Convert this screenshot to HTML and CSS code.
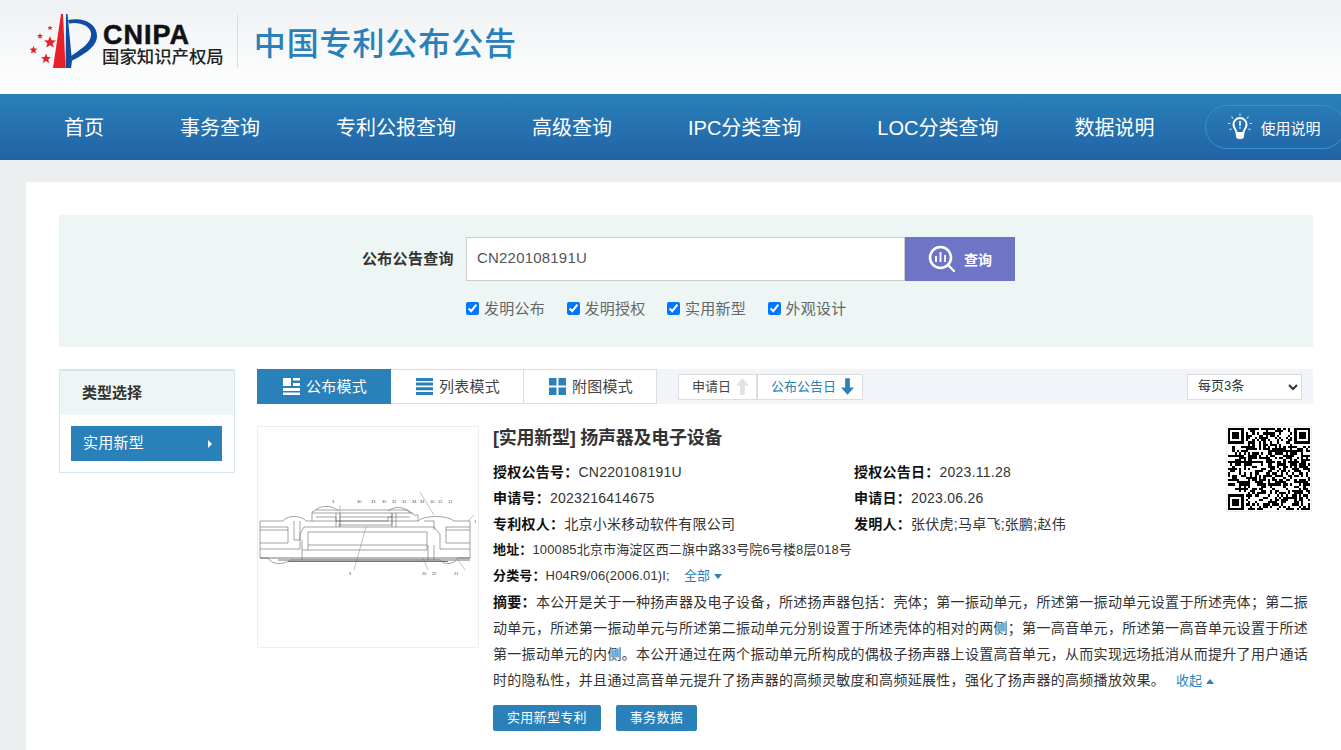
FILE: index.html
```html
<!DOCTYPE html>
<html lang="zh-CN">
<head>
    <meta charset="UTF-8">
    <title>中国专利公布公告</title>
    <link rel="stylesheet" href="styles.css">
</head>
<body>
    <header class="header">
        <div class="logo">
            <svg class="logo-mark" viewBox="28 12 72 58" width="72" height="58">
                <g fill="#e8202a">
                    <polygon points="50,36 51.6,40.2 56,40.4 52.6,43.2 53.8,47.6 50,45.2 46.2,47.6 47.4,43.2 44,40.4 48.4,40.2"/>
                    <polygon points="40,33 40.8,35 43,35.2 41.3,36.6 41.9,38.8 40,37.6 38.1,38.8 38.7,36.6 37,35.2 39.2,35"/>
                    <polygon points="50,25.5 50.7,27 52.5,27.2 51.2,28.3 51.6,30 50,29.1 48.4,30 48.8,28.3 47.5,27.2 49.3,27"/>
                    <polygon points="33.5,46 34.6,48.6 37.5,48.8 35.3,50.6 36,53.4 33.5,51.9 31,53.4 31.7,50.6 29.5,48.8 32.4,48.6"/>
                    <polygon points="46,53.5 47.4,57 51,57.2 48.2,59.4 49.2,63 46,61 42.8,63 43.8,59.4 41,57.2 44.6,57"/>
                    <polygon points="61,14 63,14 65.5,68 53,68"/>
                </g>
                <g fill="#0f4da2">
                    <polygon points="66,14 67.5,14 72,61 71,68 65.6,68"/>
                    <path d="M68 20C81 17 97 22 97 36C97 47 83 55 71.5 61L71 56C81 49 92 43 91 33C90 25 78 21.500 69 23.500Z"/>
                </g>
            </svg>
            <div class="logo-text">
                <div class="logo-en">CNIPA</div>
                <div class="logo-cn">国家知识产权局</div>
            </div>
        </div>
        <div class="header-line"></div>
        <h1 class="site-title">中国专利公布公告</h1>
    </header>

    <nav class="nav">
        <a href="#">首页</a>
        <a href="#">事务查询</a>
        <a href="#">专利公报查询</a>
        <a href="#">高级查询</a>
        <a href="#">IPC分类查询</a>
        <a href="#">LOC分类查询</a>
        <a href="#">数据说明</a>
        <div class="help-btn">
            <svg viewBox="0 0 28 28" width="28" height="28" fill="none" stroke="#fff">
                <path stroke-width="2" d="M10.5 20C10.5 16.5 7.5 15.5 7.5 11.5A6.5 6.5 0 0 1 20.5 11.5C20.5 15.5 17.5 16.5 17.5 20Z"/>
                <path fill="#fff" stroke="none" d="M10 20.5H18V23A3 3 0 0 1 15 26H13A3 3 0 0 1 10 23Z"/>
                <path stroke-width="1.6" d="M14 8V13M14 14.2V15.6"/>
                <path stroke-width="1.2" opacity=".75" d="M14 .5V3M5.5 3.5L7 5.5M22.5 3.5L21 5.5M2 10.5H4.5M23.5 10.5H26M3.5 17L5.5 15.8M24.5 17L22.5 15.8"/>
            </svg>
            <span>使用说明</span>
        </div>
    </nav>

    <div class="main">
        <section class="search-box">
            <div class="search-row">
                <label class="search-label" for="keyword">公布公告查询</label>
                <div class="search-field">
                    <input type="text" id="keyword" value="CN220108191U">
                    <button class="search-btn">
                        <svg viewBox="0 0 28 28" width="28" height="28" fill="none" stroke="#fff">
                            <circle cx="12.5" cy="12.5" r="10.5" stroke-width="2.6"/>
                            <path stroke-width="2.4" stroke-linecap="round" d="M20.5 20.5L26 26"/>
                            <path stroke-width="1.8" d="M8 11V17M12.5 7V17M17 10V17"/>
                        </svg>
                        查询
                    </button>
                </div>
                <div class="type-checks">
                    <label><input type="checkbox" checked>发明公布</label>
                    <label><input type="checkbox" checked>发明授权</label>
                    <label><input type="checkbox" checked>实用新型</label>
                    <label><input type="checkbox" checked>外观设计</label>
                </div>
            </div>
        </section>

        <div class="content">
            <aside class="sidebar">
                <div class="sidebar-title">类型选择</div>
                <div class="sidebar-list">
                    <a href="#" class="sidebar-item">实用新型<span class="caret-right"></span></a>
                </div>
            </aside>

            <div class="results">
                <div class="toolbar">
                    <a href="#" class="mode-tab active">
                        <svg viewBox="0 0 17 17" width="17" height="17" fill="currentColor"><path d="M0 0H8V8H0ZM10 0H17V2.5H10ZM10 5H17V8H10ZM0 10H17V13H0ZM0 14.5H17V17H0Z"/></svg>
                        公布模式
                    </a>
                    <a href="#" class="mode-tab">
                        <svg viewBox="0 0 17 17" width="17" height="17" fill="#2a80b9"><path d="M0 0H17V3H0ZM0 4.6H17V7.6H0ZM0 9.3H17V12.3H0ZM0 14H17V17H0Z"/></svg>
                        列表模式
                    </a>
                    <a href="#" class="mode-tab">
                        <svg viewBox="0 0 17 17" width="17" height="17" fill="#2a80b9"><path d="M0 0H7.5V7.5H0ZM9.5 0H17V7.5H9.5ZM0 9.5H7.5V17H0ZM9.5 9.5H17V17H9.5Z"/></svg>
                        附图模式
                    </a>
                    <div class="sort-group">
                        <a href="#" class="sort-btn">申请日
                            <svg viewBox="0 0 14 18" width="13" height="17" fill="#e2e2e2"><path d="M7 0L14 8H9.5V18H4.5V8H0Z"/></svg>
                        </a>
                        <a href="#" class="sort-btn current">公布公告日
                            <svg viewBox="0 0 14 18" width="13" height="17" fill="#2a80b9"><path d="M7 18L14 10H9.5V0H4.5V10H0Z"/></svg>
                        </a>
                    </div>
                    <select class="page-size">
                        <option>每页3条</option>
                    </select>
                </div>

                <article class="patent">
                    <div class="thumb">
                        <svg class="drawing" viewBox="0 0 220 220" width="220" height="220" fill="none" stroke="#666" stroke-width=".6">
                            <path d="M2 94H25C28 88 44 88 48 94H54V85L58 83H150L156 88H160V94C166 88 190 88 196 94H212V131H200C196 138 186 138 182 133H32C26 138 14 138 10 131H2Z"/>
                            <path d="M54 86H155M58 83C62 78 76 78 80 84M130 84C136 79 146 79 152 86"/>
                            <path d="M2 100H30V116H2M2 122H42V107L46 100H176L182 107V122H212M212 116H188V100H212M2 103H30M188 103H212"/>
                            <path d="M2 131H212M20 133H212M30 134.500H190" stroke-width=".9"/>
                            <path d="M50 105H169V118H50ZM50 118V123H169V118M44 113V133M170 118V133M176 118V133M50 123H44"/>
                            <path d="M36 94V113H42V94M58 90H78V94H130V90H152M78 86V100M82 86V100M134 86V100M138 86V100M166 94H176V103"/>
                            <path d="M54 94H160M80 98H134V86M82 90H134"/>
                            <path d="M82 78V100M108 100L96 143M162 65L176 88M210 94L216 88M165 131L170 143M200 133L207 143" stroke-width=".4"/>
                            <g class="drawing-nums" fill="#555" stroke="none">
                                <text x="74" y="76">3</text>
                                <text x="99" y="76">30</text>
                                <text x="113" y="76">33</text>
                                <text x="124" y="76">35</text>
                                <text x="134" y="76">32</text>
                                <text x="144" y="76">31</text>
                                <text x="154" y="76">34</text>
                                <text x="162" y="76">34</text>
                                <text x="172" y="76">10</text>
                                <text x="180" y="76">12</text>
                                <text x="190" y="76">11</text>
                                <text x="216" y="96">1</text>
                                <text x="91" y="148">3</text>
                                <text x="164" y="148">20</text>
                                <text x="174" y="148">22</text>
                                <text x="196" y="148">21</text>
                            </g>
                        </svg>
                    </div>
                    <div class="patent-info">
                        <div class="qr-box">
                            <svg id="qrCode" viewBox="0 0 37 37" width="82" height="82" shape-rendering="crispEdges"></svg>
                        </div>
                        <h2 class="patent-title">[实用新型] 扬声器及电子设备</h2>
                        <div class="field-grid">
                            <div><b>授权公告号：</b>CN220108191U</div>
                            <div><b>授权公告日：</b>2023.11.28</div>
                            <div><b>申请号：</b>2023216414675</div>
                            <div><b>申请日：</b>2023.06.26</div>
                            <div><b>专利权人：</b>北京小米移动软件有限公司</div>
                            <div><b>发明人：</b>张伏虎;马卓飞;张鹏;赵伟</div>
                        </div>
                        <div class="field"><b>地址：</b>100085北京市海淀区西二旗中路33号院6号楼8层018号</div>
                        <div class="field"><b>分类号：</b>H04R9/06(2006.01)I;<a href="#" class="more-link">全部<span class="caret-down"></span></a></div>
                        <p class="abstract"><b>摘要：</b>本公开是关于一种扬声器及电子设备，所述扬声器包括：壳体；第一振动单元，所述第一振动单元设置于所述壳体；第二振动单元，所述第一振动单元与所述第二振动单元分别设置于所述壳体的相对的两侧；第一高音单元，所述第一高音单元设置于所述第一振动单元的内侧。本公开通过在两个振动单元所构成的偶极子扬声器上设置高音单元，从而实现远场抵消从而提升了用户通话时的隐私性，并且通过高音单元提升了扬声器的高频灵敏度和高频延展性，强化了扬声器的高频播放效果。<a href="#" class="more-link">收起<span class="caret-up"></span></a></p>
                        <div class="actions">
                            <a href="#" class="action-btn">实用新型专利</a>
                            <a href="#" class="action-btn">事务数据</a>
                        </div>
                    </div>
                </article>
            </div>
        </div>
    </div>

    <script src="qr.js"></script>
</body>
</html>
```

FILE: styles.css
```css
* {
    margin: 0;
    padding: 0;
    box-sizing: border-box;
}

body {
    font-family: "Liberation Sans", "Noto Sans CJK SC", sans-serif;
    font-size: 14px;
    color: #333;
    background-color: #ebeff0;
    overflow-x: hidden;
}

a {
    text-decoration: none;
    color: inherit;
}


.header {
    height: 94px;
    display: flex;
    align-items: center;
    padding: 0 0 12px 28px;
    background: linear-gradient(#eef1f3, #ffffff);
}

.logo {
    display: flex;
    align-items: center;
}

.logo-mark {
    flex: none;
}

.logo-text {
    margin-left: 3px;
    margin-top: 6px;
}

.logo-en {
    margin: 3px 0 -3px;
    font-size: 27px;
    line-height: 24px;
    font-weight: bold;
    letter-spacing: 1px;
    color: #111;
    -webkit-text-stroke: .5px #111;
}

.logo-cn {
    margin-left: -1px;
    font-family: "Noto Sans CJK SC", sans-serif;
    font-size: 17.4px;
    line-height: 24px;
    font-weight: 500;
    color: #222;
    white-space: nowrap;
}

.header-line {
    width: 1px;
    height: 54px;
    margin: 0 16px 0 13px;
    background-color: #d8dcdd;
}

.site-title {
    font-family: "Noto Sans CJK SC", sans-serif;
    font-size: 32px;
    font-weight: 500;
    letter-spacing: .9px;
    color: #2a80b9;
}


.nav {
    height: 66px;
    display: flex;
    align-items: center;
    gap: 76px;
    padding: 0 0 2px 64px;
    overflow: hidden;
    background: linear-gradient(#2a80b9, #2163a5);
}

.nav a {
    flex: none;
    font-size: 20px;
    color: #fff;
}

.help-btn {
    flex: none;
    width: 140px;
    height: 44px;
    margin-left: -25px;
    margin-top: 2px;
    padding-left: 20px;
    display: flex;
    align-items: center;
    gap: 6px;
    font-size: 15px;
    color: #fff;
    border: 1px solid #3a8ed0;
    border-radius: 22px;
}


.main {
    margin: 22px 0 0 26px;
    padding: 33px 28px 40px 33px;
    background-color: #fff;
}

.search-box {
    height: 132px;
    padding: 22px 0 0 303px;
    background-color: #eef6f5;
}

.search-row {
    display: grid;
    grid-template-columns: 92px auto;
    column-gap: 12px;
    justify-content: start;
    align-items: center;
}

.search-label {
    font-size: 15px;
    font-weight: bold;
    letter-spacing: .3px;
    white-space: nowrap;
    padding-bottom: 3px;
    color: #333;
}

.search-field {
    display: flex;
    height: 44px;
}

.search-field input {
    width: 439px;
    padding: 0 0 3px 10px;
    font-family: inherit;
    font-size: 15px;
    letter-spacing: .2px;
    color: #555;
    border: 1px solid #ccc;
    outline: none;
}

.search-btn {
    width: 110px;
    display: flex;
    align-items: center;
    justify-content: center;
    gap: 8px;
    padding-bottom: 1px;
    font-family: inherit;
    font-size: 14px;
    font-weight: bold;
    color: #fff;
    border: none;
    background-color: #6e74c6;
}

.type-checks {
    grid-column: 2;
    margin-top: 16px;
    display: flex;
    gap: 21.500px;
    font-size: 15px;
    letter-spacing: .25px;
    color: #666;
}

.type-checks label {
    display: flex;
    align-items: center;
    gap: 5px;
}

.type-checks input {
    width: 13px;
    height: 13px;
    margin-top: 2px;
}


.content {
    display: flex;
    gap: 22px;
    margin-top: 22px;
}

.sidebar {
    flex: none;
    width: 176px;
    height: 104px;
    border: 1px solid #d5e6f0;
    border-top-width: 2px;
}

.sidebar-title {
    height: 44px;
    line-height: 44px;
    padding-left: 22px;
    font-size: 15px;
    font-weight: bold;
    background-color: #eef6f5;
}

.sidebar-list {
    padding: 11px 12px 0 11px;
}

.sidebar-item {
    height: 35px;
    display: flex;
    align-items: center;
    justify-content: space-between;
    padding: 0 10px 4px 12px;
    font-size: 15px;
    letter-spacing: .25px;
    color: #fff;
    background-color: #2a80b9;
}

.caret-right {
    margin-top: 4px;
    border-left: 4px solid #fff;
    border-top: 4px solid transparent;
    border-bottom: 4px solid transparent;
}


.results {
    flex: 1;
    min-width: 0;
}

.toolbar {
    height: 35px;
    display: flex;
    align-items: center;
    background-color: #f1f4f9;
}

.mode-tab {
    width: 133px;
    height: 35px;
    display: flex;
    align-items: center;
    justify-content: center;
    gap: 6px;
    padding: 0 0 3px 2px;
    font-size: 15px;
    letter-spacing: .25px;
    color: #444;
    background-color: #fff;
    border: 1px solid #ddd;
    border-left: none;
}

.mode-tab svg {
    margin-top: 2px;
}

.mode-tab.active {
    width: 134px;
    color: #fff;
    background-color: #2a80b9;
    border: none;
}

.sort-group {
    display: flex;
    margin-left: 21px;
}

.sort-btn {
    height: 26px;
    display: flex;
    align-items: center;
    gap: 5px;
    padding: 0 7px 3px 13px;
    font-size: 13px;
    color: #444;
    background-color: #fff;
    border: 1px solid #ddd;
}

.sort-btn svg {
    margin-top: 2px;
}

.sort-btn.current {
    padding-right: 8px;
    color: #2a80b9;
}

.page-size {
    width: 115px;
    height: 26px;
    margin-left: auto;
    margin-right: 11px;
    padding: 0 0 3px 6px;
    font-family: inherit;
    font-size: 13px;
    color: #333;
    background-color: #fff;
    border: 1px solid #ddd;
}


.patent {
    display: flex;
    gap: 14px;
    margin-top: 22px;
}

.thumb {
    flex: none;
    width: 222px;
    height: 222px;
    border: 1px solid #eee;
}

.drawing {
    display: block;
    filter: blur(.3px);
}

.drawing-nums {
    font-size: 4px;
}

.patent-info {
    flex: 1;
    min-width: 0;
}

.qr-box {
    float: right;
    width: 86px;
    height: 86px;
    margin-right: 1px;
    padding: 1px;
    border: 1px solid #eee;
}

.qr-box svg {
    display: block;
}

.patent-title {
    height: 24px;
    line-height: 24px;
    font-size: 18px;
    font-weight: bold;
    letter-spacing: -.25px;
    color: #333;
}

.field-grid {
    display: grid;
    grid-template-columns: 361px auto;
    margin-top: 9px;
    line-height: 26px;
    letter-spacing: .25px;
}

.field {
    line-height: 26px;
    font-size: 13px;
    letter-spacing: .15px;
}

.field b,
.field-grid b,
.abstract b {
    color: #111;
}

.more-link {
    margin-left: 14px;
    font-size: 13px;
    letter-spacing: 0;
    color: #2a80b9;
}

.abstract .more-link {
    margin-left: 11px;
}

.caret-down,
.caret-up {
    display: inline-block;
    margin-left: 4px;
    border-left: 4.500px solid transparent;
    border-right: 4.500px solid transparent;
    vertical-align: middle;
}

.caret-down {
    border-top: 5px solid #2a80b9;
}

.caret-up {
    border-bottom: 5px solid #2a80b9;
}

.abstract {
    line-height: 26px;
    letter-spacing: .3px;
    margin-right: 4px;
}

.actions {
    display: flex;
    gap: 15px;
    margin-top: 11px;
}

.action-btn {
    height: 26px;
    line-height: 26px;
    padding: 0 14px;
    font-size: 13px;
    letter-spacing: .3px;
    color: #fff;
    background-color: #2a80b9;
    border-radius: 2px;
}
```

FILE: qr.js
```js
// fake but plausible qr pattern, fixed seed so it stays the same
const size = 37;
let seed = 2201;

function nextBit() {
    seed = (seed * 1103515245 + 12345) & 0x7fffffff;
    return (seed >> 16) & 1;
}

function inFinder(x, y) {
    const near = (a, b) => a >= b && a < b + 8;
    return (near(x, 0) && near(y, 0)) || (near(x, size - 8) && near(y, 0)) || (near(x, 0) && near(y, size - 8));
}

let d = '';

for (let y = 0; y < size; y++) {
    for (let x = 0; x < size; x++) {
        if (!inFinder(x, y) && nextBit()) {
            d += `M${x} ${y}h1v1h-1z`;
        }
    }
}

[[0, 0], [size - 7, 0], [0, size - 7]].forEach(function (p) {
    d += `M${p[0]} ${p[1]}h7v7h-7zM${p[0] + 1} ${p[1] + 1}v5h5v-5zM${p[0] + 2} ${p[1] + 2}h3v3h-3z`;
});

document.getElementById('qrCode').innerHTML = `<path fill-rule="evenodd" d="${d}"/>`;
```
